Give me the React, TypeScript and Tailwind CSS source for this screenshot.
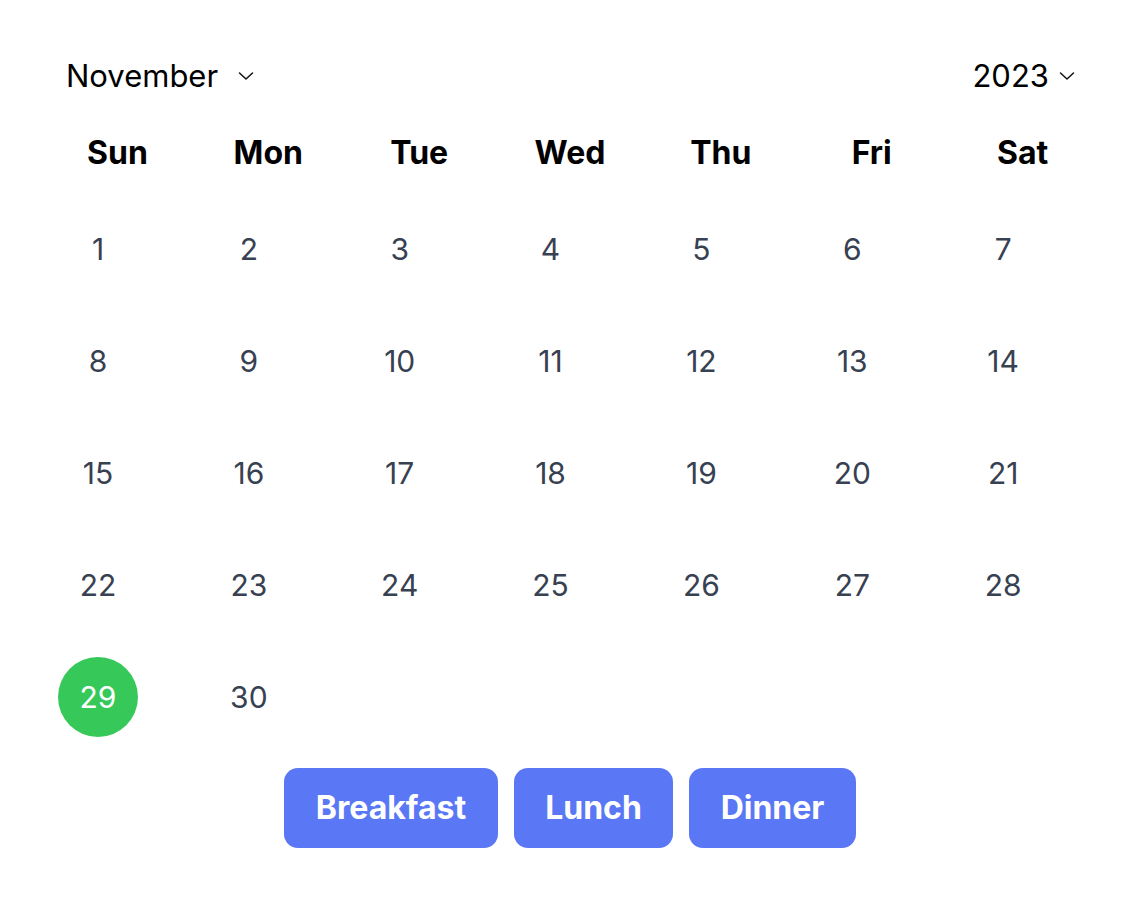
import React from "react";

const Chevron = () => (
  <svg width="16" height="16" viewBox="0 0 16 16" fill="none" stroke="#111" strokeWidth="1.5" strokeLinecap="round" strokeLinejoin="round">
    <path d="M1.5 5 L8 11 L14.5 5" />
  </svg>
);

export default function App() {
  const days = ["Sun", "Mon", "Tue", "Wed", "Thu", "Fri", "Sat"];
  const nums = Array.from({ length: 30 }, (_, i) => i + 1);
  return (
    <div className="min-h-screen bg-white" style={{ fontFamily: "Inter, 'Noto Sans', sans-serif" }}>
      <div className="ml-[42px] w-[1056px] pt-[52px]">
        <div className="flex items-center justify-between pl-6 pr-[23px] h-12">
          <div className="flex items-center gap-[20px] text-[31px] text-black">
            <span>November</span>
            <Chevron />
          </div>
          <div className="flex items-center gap-[10px] text-[31px] text-black">
            <span>2023</span>
            <Chevron />
          </div>
        </div>
        <div className="grid grid-cols-7 mt-[35px]">
          {days.map((d) => (
            <div key={d} className="text-center text-[32px] font-bold text-black leading-[36px]">
              {d}
            </div>
          ))}
        </div>
        <div className="grid grid-cols-7 gap-y-8 mt-[38px]">
          {nums.map((n) => (
            <div key={n} className="pl-4">
              <div
                className={
                  "w-20 h-20 rounded-full flex items-center justify-center text-[30px] " +
                  (n === 29 ? "bg-[#36c95a] text-white" : "text-[#374151]")
                }
              >
                {n}
              </div>
            </div>
          ))}
        </div>
        <div className="flex justify-center gap-4 mt-[31px]">
          <button className="h-20 w-[214px] rounded-[14px] bg-[#5a78f5] text-white font-bold text-[32px]">Breakfast</button>
          <button className="h-20 w-[159px] rounded-[14px] bg-[#5a78f5] text-white font-bold text-[32px]">Lunch</button>
          <button className="h-20 w-[167px] rounded-[14px] bg-[#5a78f5] text-white font-bold text-[32px]">Dinner</button>
        </div>
      </div>
    </div>
  );
}
